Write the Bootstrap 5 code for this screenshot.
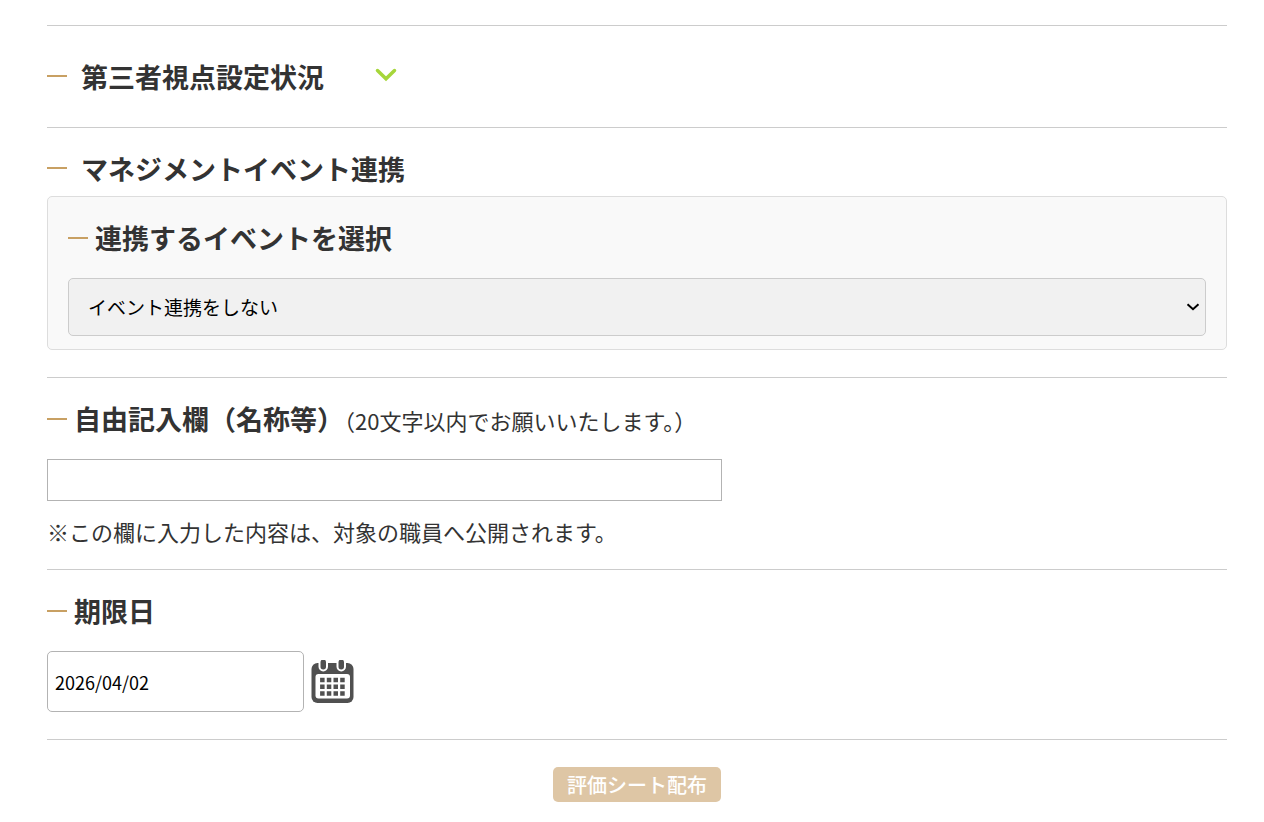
<!DOCTYPE html>
<html lang="ja">
<head>
<meta charset="utf-8">
<meta name="viewport" content="width=device-width, initial-scale=1">
<title>評価シート配布</title>
<link href="https://cdn.jsdelivr.net/npm/bootstrap@5.3.0/dist/css/bootstrap.min.css" rel="stylesheet">
<style>
body { font-family: "Noto Sans CJK JP", sans-serif; color: #333; background: #fff; }
.form-page { padding: 25px 37px 20px 47px; }
.form-block { border-top: 1px solid #ccc; padding: 21px 0 27px; }
.form-block.toggle-block { padding: 31px 0 30px; }
.form-block.note-block { padding-bottom: 22px; }
.form-block.send-block { padding: 27px 0 0; }
.block-title { font-size: 27px; line-height: 40px; font-weight: 700; color: #333; margin: 0 0 20px; display: flex; align-items: center; }
.block-title::before { content: ""; flex: none; width: 20px; height: 2px; margin: 0 7px 1px 0; background: #c8a063; }
.block-title.wide-gap { margin-bottom: 7px; }
.block-title.wide-gap::before { margin: 0 14px 3px 0; }
.toggle-block .block-title.wide-gap { margin: 0; }
.toggle-btn { border: 0; background: none; padding: 0; margin: 0 0 4px 51px; line-height: 0; }
.title-note, .block-note { font-size: 22px; line-height: 32px; font-weight: 400; }
.block-note { margin: 14px 0 0; }
.event-panel { background: #f9f9f9; border: 1px solid #ddd; border-radius: 5px; padding: 21px 20px 13px; }
.event-select { appearance: none; height: 58px; font-size: 19px; color: #000; border: 1px solid #ccc; border-radius: 5px; padding: 0 24px 0 19px;
  background: #f1f1f1 url("data:image/svg+xml,%3Csvg xmlns='http://www.w3.org/2000/svg' width='14' height='8' viewBox='0 0 14 8'%3E%3Cpath d='M1.500 1.200 7 6.200 12.500 1.200' fill='none' stroke='%23000' stroke-width='2'/%3E%3C/svg%3E") no-repeat right 5px center; }
.free-input { width: 675px; height: 42px; font-size: 19px; border: 1px solid #b3b3b3; padding: 0 7px; }
.date-row { gap: 7px; }
.date-input { width: 257px; height: 61px; font-size: 18px; color: #000; border: 1px solid #b3b3b3; border-radius: 5px; padding: 0 7px; }
.icon-btn { border: 0; background: none; padding: 0; line-height: 0; }
.send-btn, .send-btn:disabled { height: 35px; padding: 0 14px; font-size: 20px; line-height: 35px; font-weight: 500; color: #fff; background: #dec6a5; border: 0; border-radius: 5px; opacity: 1; }
</style>
</head>
<body>
<main class="form-page">
  <section class="form-block toggle-block">
    <h2 class="block-title wide-gap">第三者視点設定状況
      <button type="button" class="toggle-btn" aria-label="開く">
        <svg width="22" height="14" viewBox="0 0 22 14" fill="none" stroke="#a6d63a" stroke-width="3.500" stroke-linecap="round" stroke-linejoin="miter"><path d="M2.500 2.500 11 10.800 19.500 2.500"/></svg>
      </button>
    </h2>
  </section>

  <section class="form-block">
    <h2 class="block-title wide-gap">マネジメントイベント連携</h2>
    <div class="event-panel">
      <h3 class="block-title"><label for="event">連携するイベントを選択</label></h3>
      <select id="event" class="event-select d-block w-100">
        <option>イベント連携をしない</option>
      </select>
    </div>
  </section>

  <section class="form-block note-block">
    <h2 class="block-title"><label for="free">自由記入欄（名称等）<span class="title-note">（20文字以内でお願いいたします。）</span></label></h2>
    <input type="text" id="free" class="free-input d-block mw-100" maxlength="20">
    <p class="block-note">※この欄に入力した内容は、対象の職員へ公開されます。</p>
  </section>

  <section class="form-block">
    <h2 class="block-title"><label for="due">期限日</label></h2>
    <div class="date-row d-flex align-items-center">
      <input type="text" id="due" class="date-input" value="2026/04/02">
      <button type="button" class="icon-btn" aria-label="カレンダー">
        <svg width="43" height="44" viewBox="0 0 43 44">
          <rect x=".5" y="3" width="42" height="40" rx="6" fill="#505050"/>
          <rect x="4.500" y="14" width="34.500" height="24.500" rx="3" fill="#fff"/>
          <g fill="#505050" stroke="#fff" stroke-width="2"><rect x="8.500" y="-1.500" width="7.500" height="12" rx="3.700"/><rect x="26.500" y="-1.500" width="7.500" height="12" rx="3.700"/></g>
          <path d="M9.100 20h24.600M9.100 26.700h24.600M9.100 33.400h24.600" stroke="#505050" stroke-width="4.500" stroke-dasharray="4.500 2.200"/>
        </svg>
      </button>
    </div>
  </section>

  <div class="form-block send-block text-center">
    <button type="button" class="send-btn btn" disabled>評価シート配布</button>
  </div>
</main>
<script src="https://cdn.jsdelivr.net/npm/bootstrap@5.3.0/dist/js/bootstrap.bundle.min.js"></script>
</body>
</html>
